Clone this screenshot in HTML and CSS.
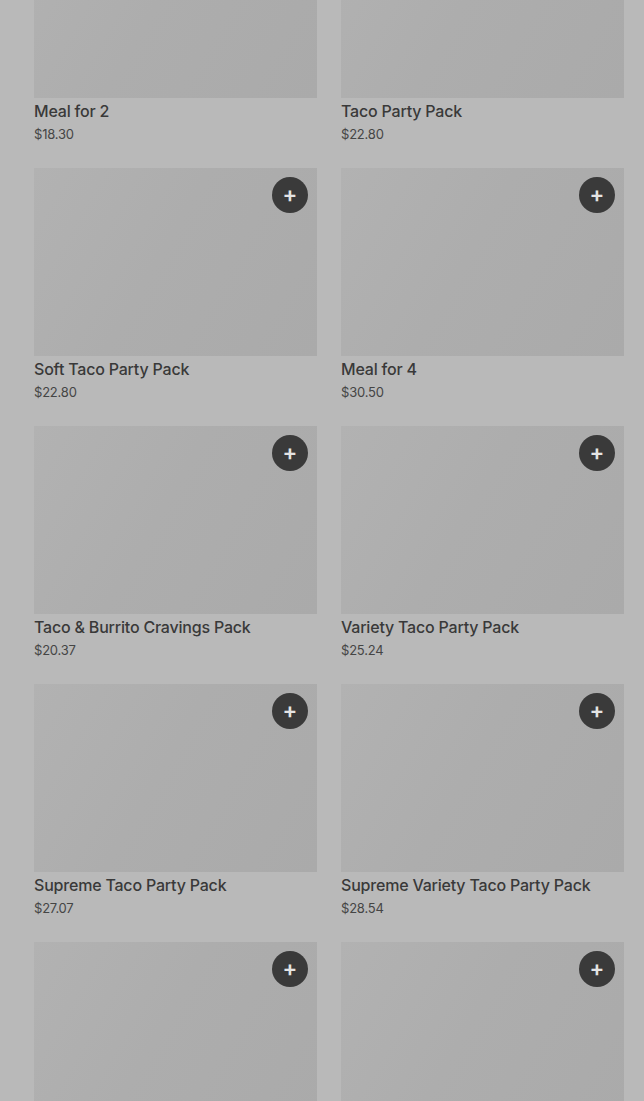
FILE: index.html
```html
<!DOCTYPE html>
<html lang="en">
<head>
    <meta charset="UTF-8">
    <meta name="viewport" content="width=device-width, initial-scale=1.0">
    <title>Packs</title>
    <link rel="stylesheet" href="styles.css">
</head>
<body>
    <div class="menu">
        <div class="item">
            <div class="photo"></div>
            <div class="name">Meal for 2</div>
            <div class="price">$18.30</div>
        </div>
        <div class="item">
            <div class="photo"></div>
            <div class="name">Taco Party Pack</div>
            <div class="price">$22.80</div>
        </div>
        <div class="item">
            <div class="photo"><button class="add">+</button></div>
            <div class="name">Soft Taco Party Pack</div>
            <div class="price">$22.80</div>
        </div>
        <div class="item">
            <div class="photo"><button class="add">+</button></div>
            <div class="name">Meal for 4</div>
            <div class="price">$30.50</div>
        </div>
        <div class="item">
            <div class="photo"><button class="add">+</button></div>
            <div class="name">Taco &amp; Burrito Cravings Pack</div>
            <div class="price">$20.37</div>
        </div>
        <div class="item">
            <div class="photo"><button class="add">+</button></div>
            <div class="name">Variety Taco Party Pack</div>
            <div class="price">$25.24</div>
        </div>
        <div class="item">
            <div class="photo"><button class="add">+</button></div>
            <div class="name">Supreme Taco Party Pack</div>
            <div class="price">$27.07</div>
        </div>
        <div class="item">
            <div class="photo"><button class="add">+</button></div>
            <div class="name">Supreme Variety Taco Party Pack</div>
            <div class="price">$28.54</div>
        </div>
        <div class="item">
            <div class="photo"><button class="add">+</button></div>
        </div>
        <div class="item">
            <div class="photo"><button class="add">+</button></div>
        </div>
    </div>
</body>
</html>
```

FILE: styles.css
```css
:root {
    --bg: #b9b9b9;
    --fg: #393939;
    --fg2: #454545;
    --btn: #3a3a3a;
}

* {
    margin: 0;
    padding: 0;
    box-sizing: border-box;
}

body {
    background-color: var(--bg);
    font-family: Inter, "Liberation Sans", sans-serif;
    overflow: hidden;
    height: 1101px;
}

.menu {
    display: grid;
    grid-template-columns: 283px 283px;
    column-gap: 24px;
    row-gap: 24px;
    padding: 0 20px 0 34px;
    margin-top: -90px;
}

.photo {
    position: relative;
    height: 188px;
    background: linear-gradient(120deg, #b2b2b2 0%, #adadad 45%, #aaaaaa 100%);
}

.add {
    position: absolute;
    top: 9px;
    right: 9px;
    width: 36px;
    height: 36px;
    padding-bottom: 2px;
    border: none;
    border-radius: 50%;
    background-color: var(--btn);
    color: #e4e4e4;
    font-family: Inter, sans-serif;
    font-size: 22px;
    font-weight: 600;
    line-height: 32px;
    text-align: center;
    cursor: pointer;
}

.name {
    margin-top: 2px;
    font-size: 16px;
    font-weight: 500;
    letter-spacing: -0.2px;
    line-height: 22px;
    color: var(--fg);
    white-space: nowrap;
}

.price {
    margin-top: 2px;
    font-size: 13px;
    letter-spacing: -0.2px;
    line-height: 20px;
    color: var(--fg2);
}
```
